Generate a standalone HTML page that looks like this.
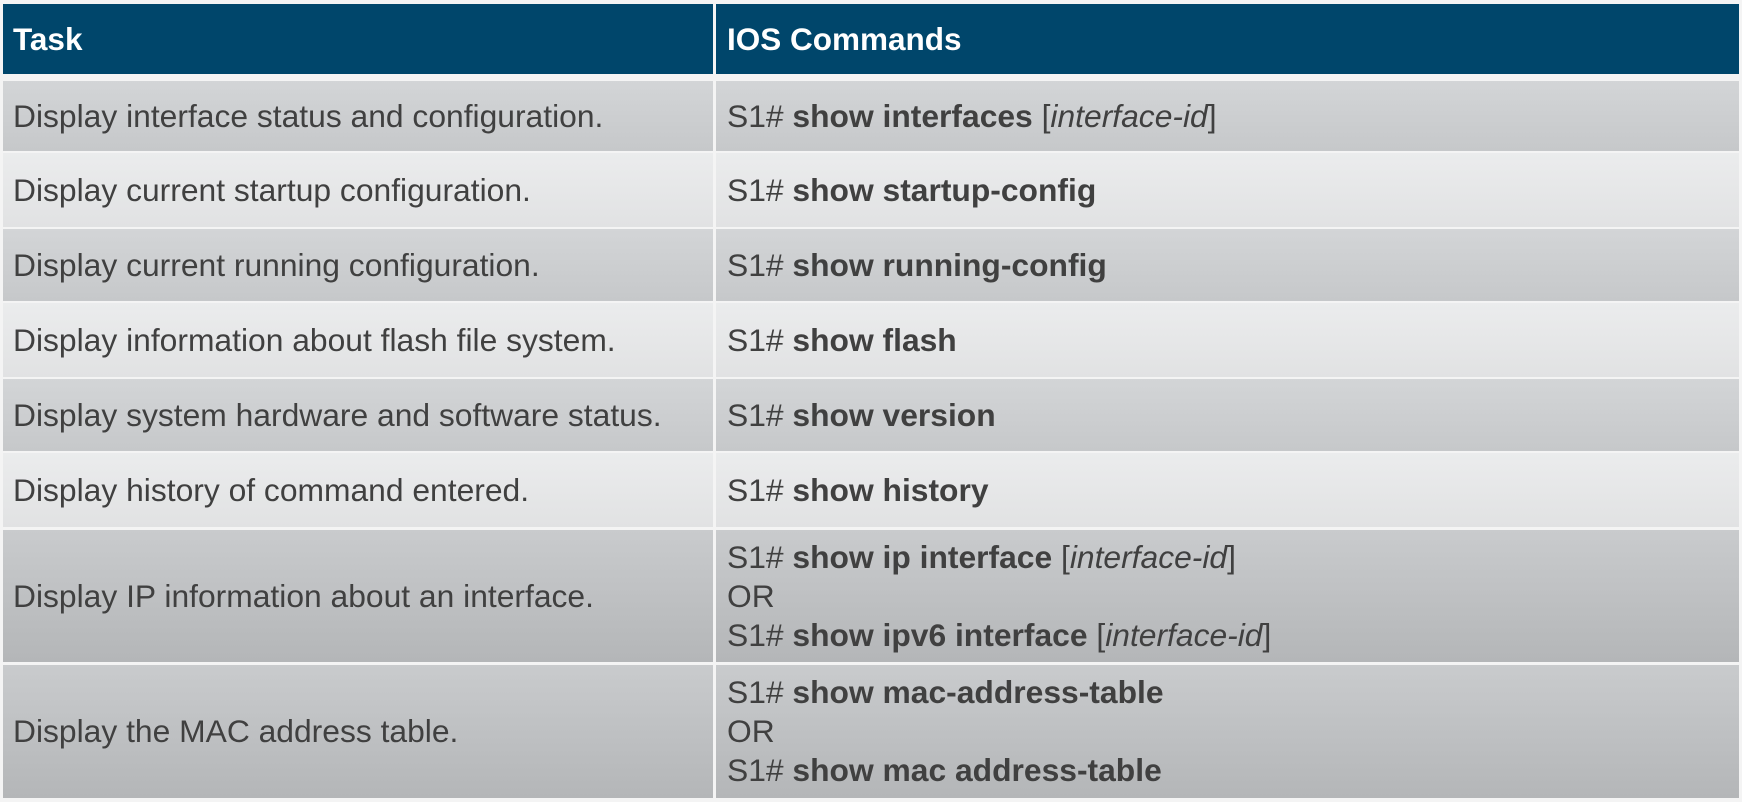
<!DOCTYPE html>
<html><head><meta charset="utf-8"><style>
body{margin:0;width:1742px;height:802px;background:#f4f4f4;font-family:"Liberation Sans",Arial,sans-serif;overflow:hidden;position:relative}
.c{position:absolute;box-sizing:border-box;display:flex;flex-direction:column;justify-content:center;font-size:31.8px;color:#404040;line-height:39px;white-space:nowrap}
.h{background:#00466b;color:#fff;font-weight:bold;font-size:31.5px}
.d{background:linear-gradient(#d3d5d7,#c6c8ca)}
.l{background:linear-gradient(#ebeced,#e1e2e3)}
.t{background:linear-gradient(#c9cbcd,#b4b6b8)}
.L{left:3px;width:710px;padding-left:10px}
.R{left:716px;width:1023px;padding-left:11px}
b{font-weight:bold}
</style></head><body>
<div class="c h L" style="top:4px;height:70px">Task</div>
<div class="c h R" style="top:4px;height:70px">IOS Commands</div>

<div class="c d L" style="top:81px;height:70px">Display interface status and configuration.</div>
<div class="c d R" style="top:81px;height:70px"><span>S1# <b>show interfaces</b> [<i>interface-id</i>]</span></div>

<div class="c l L" style="top:153px;height:74px">Display current startup configuration.</div>
<div class="c l R" style="top:153px;height:74px"><span>S1# <b>show startup-config</b></span></div>

<div class="c d L" style="top:229px;height:72px">Display current running configuration.</div>
<div class="c d R" style="top:229px;height:72px"><span>S1# <b>show running-config</b></span></div>

<div class="c l L" style="top:303px;height:74px">Display information about flash file system.</div>
<div class="c l R" style="top:303px;height:74px"><span>S1# <b>show flash</b></span></div>

<div class="c d L" style="top:379px;height:72px">Display system hardware and software status.</div>
<div class="c d R" style="top:379px;height:72px"><span>S1# <b>show version</b></span></div>

<div class="c l L" style="top:453px;height:74px">Display history of command entered.</div>
<div class="c l R" style="top:453px;height:74px"><span>S1# <b>show history</b></span></div>

<div class="c t L" style="top:530px;height:132px">Display IP information about an interface.</div>
<div class="c t R" style="top:530px;height:132px"><span>S1# <b>show ip interface</b> [<i>interface-id</i>]</span><span>OR</span><span>S1# <b>show ipv6 interface</b> [<i>interface-id</i>]</span></div>

<div class="c t L" style="top:665px;height:133px">Display the MAC address table.</div>
<div class="c t R" style="top:665px;height:133px"><span>S1# <b>show mac-address-table</b></span><span>OR</span><span>S1# <b>show mac address-table</b></span></div>
</body></html>
